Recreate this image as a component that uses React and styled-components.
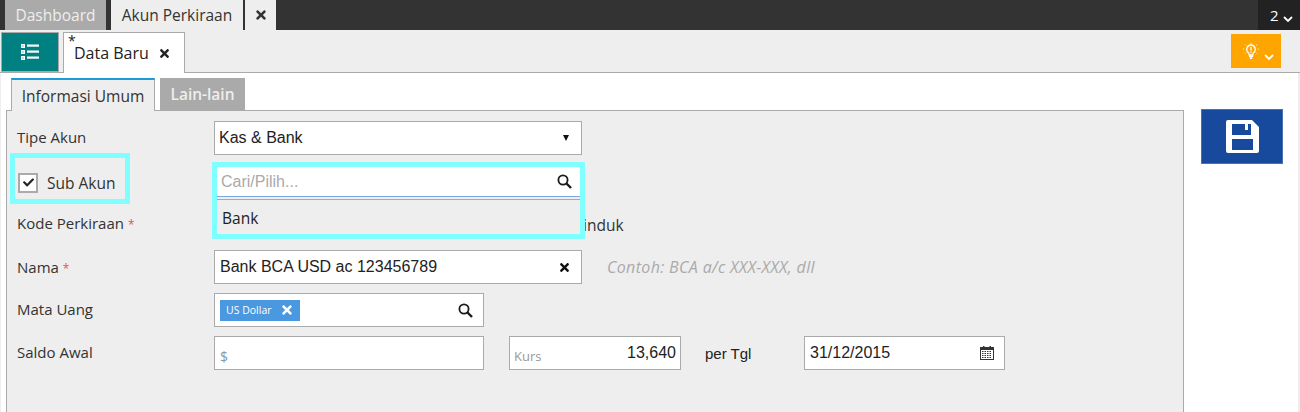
import React from "react";
import styled, { createGlobalStyle } from "styled-components";
import { FaTimes, FaCheck } from "react-icons/fa";

const GlobalStyle = createGlobalStyle`
  html, body {
    margin: 0;
    padding: 0;
    height: 412px;
    overflow: hidden;
    background: #eeeeee;
    font-family: "Open Sans", "Liberation Sans", sans-serif;
    color: #222;
  }
`;

const Page = styled.div`
  width: 1300px;
  height: 412px;
  display: flex;
  flex-direction: column;
  overflow: hidden;
`;

const TopBar = styled.div`
  height: 30px;
  flex: none;
  background: #333333;
  display: flex;
  padding-left: 5px;
`;

const TopTab = styled.div`
  height: 30px;
  width: ${(p) => p.$width}px;
  margin-right: ${(p) => p.$gap}px;
  display: flex;
  align-items: center;
  justify-content: center;
  box-sizing: border-box;
  font-size: 15.5px;
  background: ${(p) => (p.$active ? "#eeeeee" : "#aaaaaa")};
  color: ${(p) => (p.$active ? "#333" : "#eee")};
`;

const CounterBox = styled.div`
  margin-left: auto;
  width: 42px;
  background: #222222;
  color: #fff;
  font-size: 15px;
  display: flex;
  align-items: center;
  padding-left: 12px;
  box-sizing: border-box;
  gap: 4px;
`;

const CounterArrow = styled.span`
  display: flex;
  margin-top: 8px;
`;

const SubBar = styled.div`
  height: 43px;
  flex: none;
  box-sizing: border-box;
  border-bottom: 1px solid #aaaaaa;
  display: flex;
  align-items: flex-start;
  padding: 2px 19px 0 1px;
`;

const ListButton = styled.div`
  width: 58px;
  height: 40px;
  box-sizing: border-box;
  border: 1px solid #aaaaaa;
  background: #008080;
  display: flex;
  align-items: center;
  justify-content: center;
`;

const DocTab = styled.div`
  position: relative;
  width: 122px;
  height: 41px;
  margin-left: 4px;
  box-sizing: border-box;
  background: #fff;
  border: 1px solid #aaaaaa;
  border-bottom: none;
  display: flex;
  align-items: center;
  padding-left: 10px;
  gap: 9px;
  font-size: 16px;
  color: #222;
`;

const DirtyMark = styled.span`
  position: absolute;
  left: 4px;
  top: 1px;
  font-size: 14px;
  line-height: 14px;
`;

const HintButton = styled.div`
  margin: 2px 0 0 auto;
  width: 50px;
  height: 34px;
  background: #ffa500;
  display: flex;
  align-items: center;
  justify-content: center;
  gap: 5px;
  padding-left: 4px;
  box-sizing: border-box;
`;

const HintArrow = styled.span`
  display: flex;
  margin-top: 12px;
`;

const WhiteArea = styled.div`
  flex: 1;
  margin: 0 2px 0 1px;
  background: #fff;
  display: flex;
  padding: 5px 0 0 5px;
  min-height: 0;
`;

const FormColumn = styled.div`
  width: 1178px;
  display: flex;
  flex-direction: column;
`;

const TabRow = styled.div`
  display: flex;
  gap: 5px;
  padding-left: 5px;
  height: 32px;
  flex: none;
  position: relative;
  z-index: 1;
`;

const InnerTab = styled.div`
  box-sizing: border-box;
  height: ${(p) => (p.$active ? "33px" : "32px")};
  width: ${(p) => p.$width}px;
  display: flex;
  align-items: center;
  justify-content: center;
  font-size: 15.5px;
  background: ${(p) => (p.$active ? "#eeeeee" : "#aaaaaa")};
  color: ${(p) => (p.$active ? "#333" : "#eee")};
  font-weight: ${(p) => (p.$active ? 400 : 600)};
  border-top: ${(p) => (p.$active ? "2px solid #1e9ad6" : "none")};
  border-left: ${(p) => (p.$active ? "1px solid #aaa" : "none")};
  border-right: ${(p) => (p.$active ? "1px solid #aaa" : "none")};
`;

const Panel = styled.div`
  flex: 1;
  box-sizing: border-box;
  background: #eeeeee;
  border: 1px solid #aaaaaa;
  border-bottom: none;
  padding: 10px 0 0 10px;
  display: flex;
  flex-direction: column;
  gap: 9px;
  position: relative;
`;

const Row = styled.div`
  height: 34px;
  display: flex;
  align-items: center;
  position: relative;
`;

const Label = styled.div`
  width: 197px;
  flex: none;
  font-size: 15px;
  line-height: 20px;
  color: #333;
  position: relative;
  top: ${(p) => p.$top || 0}px;
`;

const Required = styled.span`
  color: #f05050;
  margin-left: 4px;
  font-size: 12px;
`;

const Field = styled.div`
  width: ${(p) => p.$width}px;
  margin-left: ${(p) => p.$left || 0}px;
  height: 34px;
  flex: none;
  box-sizing: border-box;
  background: #fff;
  border: 1px solid #aaaaaa;
  display: flex;
  align-items: center;
  justify-content: space-between;
  padding: 0 ${(p) => p.$right || 10}px 0 ${(p) => p.$pad || 5}px;
  font-family: "Liberation Sans", Arial, sans-serif;
  font-size: 16px;
  color: #222;
`;

const Arrow = styled.span`
  width: 0;
  height: 0;
  margin-right: 2px;
  border-left: 3px solid transparent;
  border-right: 3px solid transparent;
  border-top: 6px solid #111;
`;

const SubAkunBox = styled.label`
  position: absolute;
  left: -7px;
  top: -11px;
  width: 120px;
  height: 51px;
  box-sizing: border-box;
  border: 5px solid #7fffff;
  display: flex;
  align-items: center;
  padding: 8px 0 0 3px;
  gap: 9px;
  font-size: 15.5px;
  line-height: 20px;
  color: #333;
`;

const CheckBox = styled.span`
  width: 20px;
  height: 20px;
  box-sizing: border-box;
  border: 2px solid #aaaaaa;
  background: #fff;
  display: flex;
  align-items: center;
  justify-content: center;
  color: #222;
  font-size: 11px;
`;

const PickerOverlay = styled.div`
  position: absolute;
  left: 195px;
  top: -2px;
  width: 373px;
  height: 77px;
  box-sizing: border-box;
  border: 5px solid #7fffff;
  background: #eeeeee;
  z-index: 2;
  display: flex;
  flex-direction: column;
`;

const PickerInput = styled.div`
  height: 30px;
  flex: none;
  box-sizing: border-box;
  background: #fff;
  border-bottom: 1px solid #7aa7e0;
  display: flex;
  align-items: center;
  justify-content: space-between;
  padding: 0 8px 0 4px;
  font-family: "Liberation Sans", Arial, sans-serif;
  font-size: 16px;
  color: #aaaaaa;
`;

const PickerOption = styled.div`
  flex: 1;
  border-top: 1px solid #aaaaaa;
  margin-top: 2px;
  display: flex;
  align-items: center;
  padding: 2px 0 0 5px;
  font-size: 15.5px;
  color: #222;
`;

const InlineNote = styled.span`
  position: absolute;
  left: 566px;
  top: 7px;
  font-size: 15.5px;
  color: #333;
`;

const Hint = styled.span`
  margin-left: 25px;
  font-size: 16px;
  letter-spacing: 0.35px;
  font-style: italic;
  color: #aaaaaa;
`;

const Chip = styled.span`
  height: 21px;
  box-sizing: border-box;
  background: #4a98e0;
  color: #fff;
  display: flex;
  align-items: center;
  gap: 8px;
  padding: 0 6px;
  font-family: "Open Sans", sans-serif;
  font-size: 10.5px;
`;

const Prefix = styled.span`
  font-family: "Open Sans", sans-serif;
  font-size: ${(p) => p.$size || 13}px;
  color: ${(p) => p.$color || "#999"};
  position: relative;
  top: 3px;
`;

const PerTgl = styled.span`
  margin-left: 24px;
  width: 99px;
  flex: none;
  font-family: "Liberation Sans", Arial, sans-serif;
  font-size: 15px;
  color: #222;
`;

const SaveColumn = styled.div`
  padding: 31px 0 0 17px;
`;

const SaveButton = styled.button`
  width: 82px;
  height: 55px;
  padding: 0;
  background: #174a9c;
  border: 1px solid #4a72b0;
  display: flex;
  align-items: center;
  justify-content: center;
`;

const Chevron = ({ size = 10, color = "#fff" }) => (
  <svg width={size} height={size * 0.6} viewBox="0 0 10 6" style={{ flex: "none" }}>
    <path d="M1 1l4 4 4-4" fill="none" stroke={color} strokeWidth="1.8" />
  </svg>
);

const SearchIcon = () => (
  <svg width="15" height="15" viewBox="0 0 15 15" fill="none" stroke="#1a1a1a" style={{ flex: "none" }}>
    <circle cx="6" cy="6" r="4.600" strokeWidth="1.800" />
    <path d="M9.500 9.500L14 14" strokeWidth="2.400" />
  </svg>
);

const ListIcon = () => (
  <svg width="20" height="18" viewBox="0 0 20 18" fill="#fff">
    <path d="M1 1h4v4H1zM2.500 2.500v1h1v-1z" fillRule="evenodd" />
    <path d="M1 7h4v4H1zM2.500 8.500v1h1v-1z" fillRule="evenodd" />
    <path d="M1 13h4v4H1zM2.500 14.500v1h1v-1z" fillRule="evenodd" />
    <rect x="7" y="1.500" width="12" height="2.200" />
    <rect x="7" y="7.500" width="12" height="2.200" />
    <rect x="7" y="13.500" width="12" height="2.200" />
  </svg>
);

const BulbIcon = () => (
  <svg width="16" height="17" viewBox="0 0 16 17" fill="none" stroke="#fff">
    <path d="M8 2a4.300 4.300 0 0 0-2.500 7.800c.5.400.6 1.200.6 2h3.800c0-.8.100-1.600.6-2A4.300 4.300 0 0 0 8 2z" strokeWidth="1.300" />
    <path d="M6 13.200h4M6.800 15.200h2.400" strokeWidth="1.800" />
    <path d="M8 4v3.500M8 8.500v1.200" strokeWidth="1.300" />
    <path d="M0 6h1.500M14.500 6H16M2 1.500l1 1M14 1.500l-1 1M2 10.500l1-1M14 10.500l-1-1M8 0v1" strokeDasharray="1 1" />
  </svg>
);

const CalendarIcon = () => (
  <svg width="14" height="14" viewBox="0 0 14 14" style={{ flex: "none" }}>
    <rect x="0.500" y="1.500" width="13" height="12" fill="#fff" stroke="#333" />
    <rect x="0" y="1" width="14" height="3" fill="#333" />
    <rect x="3" y="0" width="1.500" height="2" fill="#333" />
    <rect x="9.500" y="0" width="1.500" height="2" fill="#333" />
    <path d="M2 5.500h10M2 7.500h10M2 9.500h10M2 11.500h10" stroke="#333" strokeDasharray="1.500 1" />
  </svg>
);

const SaveIcon = () => (
  <svg width="33" height="33" viewBox="0 0 33 33">
    <path
      fill="#fff"
      fillRule="evenodd"
      d="M2 0H26L33 7V31A2 2 0 0 1 31 33H2A2 2 0 0 1 0 31V2A2 2 0 0 1 2 0ZM6 4V15H25V4H22V10H19V4ZM6 19V30H27V19Z"
    />
  </svg>
);

const App = () => {
  return (
    <Page>
      <GlobalStyle />
      <TopBar>
        <TopTab $width={101} $gap={5}>Dashboard</TopTab>
        <TopTab $width={132} $gap={2} $active>Akun Perkiraan</TopTab>
        <TopTab $width={31} $gap={0} $active><FaTimes size={14} color="#333" /></TopTab>
        <CounterBox>2<CounterArrow><Chevron /></CounterArrow></CounterBox>
      </TopBar>
      <SubBar>
        <ListButton><ListIcon /></ListButton>
        <DocTab>
          <DirtyMark>*</DirtyMark>
          Data Baru
          <FaTimes size={13} color="#222" />
        </DocTab>
        <HintButton><BulbIcon /><HintArrow><Chevron /></HintArrow></HintButton>
      </SubBar>
      <WhiteArea>
        <FormColumn>
          <TabRow>
            <InnerTab $active $width={144}>Informasi Umum</InnerTab>
            <InnerTab $width={85}>Lain-lain</InnerTab>
          </TabRow>
          <Panel>
            <Row>
              <Label $top={-1}>Tipe Akun</Label>
              <Field $width={368} $pad={4} $right={10}>Kas &amp; Bank<Arrow /></Field>
            </Row>
            <Row>
              <SubAkunBox><CheckBox><FaCheck /></CheckBox>Sub Akun</SubAkunBox>
              <PickerOverlay>
                <PickerInput>Cari/Pilih...<SearchIcon /></PickerInput>
                <PickerOption>Bank</PickerOption>
              </PickerOverlay>
            </Row>
            <Row>
              <Label>Kode Perkiraan<Required>*</Required></Label>
              <InlineNote>induk</InlineNote>
            </Row>
            <Row>
              <Label $top={1}>Nama<Required>*</Required></Label>
              <Field $width={368}>Bank BCA USD ac 123456789<FaTimes size={13} color="#111" /></Field>
              <Hint>Contoh: BCA a/c XXX-XXX, dll</Hint>
            </Row>
            <Row>
              <Label $top={-1}>Mata Uang</Label>
              <Field $width={270}>
                <Chip>US Dollar<FaTimes size={14} /></Chip>
                <SearchIcon />
              </Field>
            </Row>
            <Row>
              <Label $top={-1}>Saldo Awal</Label>
              <Field $width={270}><Prefix $size={14} $color="#7f9bb0">$</Prefix></Field>
              <Field $width={172} $left={25} $pad={4} $right={4}>
                <Prefix>Kurs</Prefix>13,640
              </Field>
              <PerTgl>per Tgl</PerTgl>
              <Field $width={201}>31/12/2015<CalendarIcon /></Field>
            </Row>
          </Panel>
        </FormColumn>
        <SaveColumn>
          <SaveButton><SaveIcon /></SaveButton>
        </SaveColumn>
      </WhiteArea>
    </Page>
  );
};

export default App;
